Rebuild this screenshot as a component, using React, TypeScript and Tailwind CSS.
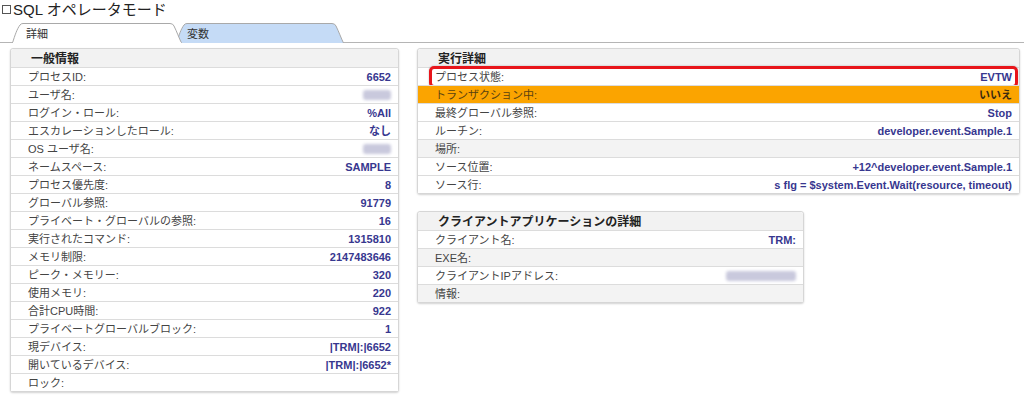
import React from "react";

type Row = { label: string; value?: string; blur?: number; bg?: string; highlight?: boolean };

const general: Row[] = [
  { label: "プロセスID:", value: "6652" },
  { label: "ユーザ名:", blur: 28 },
  { label: "ログイン・ロール:", value: "%All" },
  { label: "エスカレーションしたロール:", value: "なし" },
  { label: "OS ユーザ名:", blur: 28 },
  { label: "ネームスペース:", value: "SAMPLE" },
  { label: "プロセス優先度:", value: "8" },
  { label: "グローバル参照:", value: "91779" },
  { label: "プライベート・グローバルの参照:", value: "16" },
  { label: "実行されたコマンド:", value: "1315810" },
  { label: "メモリ制限:", value: "2147483646" },
  { label: "ピーク・メモリー:", value: "320" },
  { label: "使用メモリ:", value: "220" },
  { label: "合計CPU時間:", value: "922" },
  { label: "プライベートグローバルブロック:", value: "1" },
  { label: "現デバイス:", value: "|TRM|:|6652" },
  { label: "開いているデバイス:", value: "|TRM|:|6652*" },
  { label: "ロック:" },
];

const exec: Row[] = [
  { label: "プロセス状態:", value: "EVTW", highlight: true },
  { label: "トランザクション中:", value: "いいえ", bg: "orange" },
  { label: "最終グローバル参照:", value: "Stop" },
  { label: "ルーチン:", value: "developer.event.Sample.1" },
  { label: "場所:", bg: "gray" },
  { label: "ソース位置:", value: "+12^developer.event.Sample.1" },
  { label: "ソース行:", value: "s flg = $system.Event.Wait(resource, timeout)" },
];

const client: Row[] = [
  { label: "クライアント名:", value: "TRM:" },
  { label: "EXE名:", bg: "gray" },
  { label: "クライアントIPアドレス:", blur: 70 },
  { label: "情報:", bg: "gray" },
];

function RowView({ r }: { r: Row }) {
  const bg =
    r.bg === "orange" ? "bg-[#fba400]" : r.bg === "gray" ? "bg-[#f3f3f3]" : "bg-white";
  const labelColor = r.bg === "orange" ? "text-[#5a4210]" : "text-[#444]";
  const valueColor = r.bg === "orange" ? "text-[#3a2a10]" : "text-[#37378f]";
  return (
    <div
      className={`relative flex h-[18px] items-center justify-between border-t border-[#dcdcdc] pl-[17px] pr-[7px] ${bg}`}
    >
      <span className={`pt-[1px] text-[11px] leading-none ${labelColor}`}>{r.label}</span>
      {r.value && (
        <span className={`pt-[1px] text-[11px] font-bold leading-none ${valueColor}`}>{r.value}</span>
      )}
      {r.blur && (
        <span
          className="h-[10px] rounded-[3px] bg-[#c9c9dd] blur-[1.5px]"
          style={{ width: r.blur }}
        />
      )}
      {r.highlight && (
        <div className="pointer-events-none absolute bottom-[-3px] left-[11px] right-[1px] top-[-2px] rounded-[5px] border-[3px] border-[#e8151b] shadow-[0_0_2px_rgba(0,0,0,0.3)]" />
      )}
    </div>
  );
}

function Panel({ title, rows, className }: { title: string; rows: Row[]; className: string }) {
  return (
    <div
      className={`overflow-visible rounded-[3px] border border-[#d6d6d6] bg-white shadow-[0_1px_2px_rgba(0,0,0,0.18)] ${className}`}
    >
      <div className="flex h-[18px] items-center rounded-t-[3px] bg-[#f2f2f2] pl-[20px] pt-[1px] text-[12px] font-bold leading-none text-[#222]">
        {title}
      </div>
      {rows.map((r, i) => (
        <RowView key={i} r={r} />
      ))}
    </div>
  );
}

function Tab({ label, active, width }: { label: string; active?: boolean; width: number }) {
  return (
    <div className="relative h-[20px]" style={{ width }}>
      <svg className="absolute inset-0" width={width} height={20} viewBox={`0 0 ${width} 20`}>
        <path
          d={`M0.5 20 C3 12 5 6 8 2 Q9 0.5 11 0.5 L${width - 12} 0.5 Q${width - 9} 0.5 ${width - 8} 3 C${width - 5} 9 ${width - 3} 15 ${width - 0.5} 20`}
          fill={active ? "#ffffff" : "#c5dbf6"}
          stroke="#a9a9a9"
          strokeWidth="1"
        />
      </svg>
      <span
        className={`absolute top-[6px] text-[11px] leading-none text-[#333] ${active ? "left-[14px]" : "left-[11px]"}`}
      >
        {label}
      </span>
    </div>
  );
}

export default function App() {
  return (
    <div
      className="h-[397px] w-[1024px] overflow-hidden bg-white"
      style={{ fontFamily: '"Liberation Sans", Arial, "Noto Sans CJK JP", sans-serif' }}
    >
      <div className="flex h-[18px] items-center pl-[2px]">
        <span className="mr-[2px] inline-block h-[9px] w-[9px] border border-[#555] bg-white" />
        <span className="text-[15px] leading-none text-[#222]">SQL オペレータモード</span>
      </div>
      <div className="relative mt-[5px] flex h-[20px] pl-[12px]">
        <div className="absolute bottom-0 left-0 right-0 h-px bg-[#b5b5b5]" />
        <div className="relative z-0 order-2 -ml-[6px]">
          <Tab label="変数" width={168} />
        </div>
        <div className="relative z-10 order-1">
          <Tab label="詳細" active width={170} />
          <div className="absolute bottom-0 left-[1px] right-[1px] h-px bg-white" />
        </div>
      </div>
      <div className="flex items-start gap-[18px] pl-[10px] pt-[5px]">
        <Panel title="一般情報" rows={general} className="w-[389px]" />
        <div className="flex flex-col gap-[17px]">
          <Panel title="実行詳細" rows={exec} className="w-[603px]" />
          <Panel title="クライアントアプリケーションの詳細" rows={client} className="w-[387px]" />
        </div>
      </div>
    </div>
  );
}
